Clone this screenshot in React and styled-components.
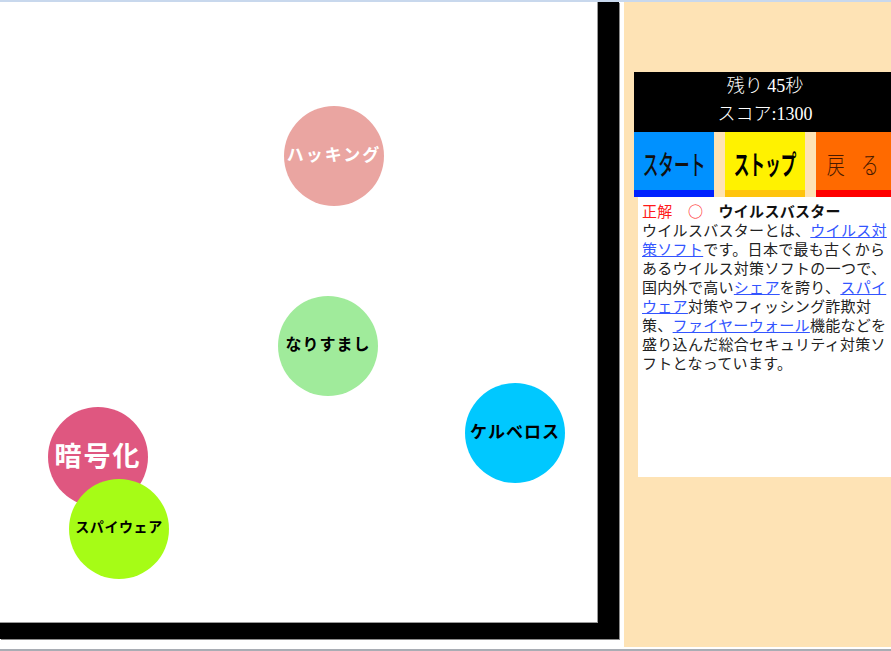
import React from "react";
import styled, { createGlobalStyle } from "styled-components";

const Global = createGlobalStyle`
  html, body { margin: 0; padding: 0; background: #fff; overflow: hidden; }
  body { width: 891px; height: 651px; font-family: "Liberation Serif", "Noto Sans CJK JP", serif; }
`;

const Page = styled.div`
  width: 891px;
  height: 651px;
  display: flex;
  flex-direction: column;
  overflow: hidden;
`;

const TopStrip = styled.div`
  height: 2px;
  background: #c8d8ed;
  flex: none;
`;

const Main = styled.div`
  display: flex;
  align-items: flex-start;
  gap: 5px;
  height: 645px;
  flex: none;
`;

const Bottom = styled.div`
  margin-top: 2px;
  height: 2px;
  background: #a9adb4;
  flex: none;
`;

const Game = styled.div`
  position: relative;
  width: 598px;
  height: 621px;
  background: #fff;
  border-right: 21px solid #000;
  border-bottom: 16px solid #000;
  box-shadow: inset -1px -1px 0 #9a9a9a, 1px 1px 0 #8a8a8a;
  flex: none;
`;

const Ball = styled.div`
  position: absolute;
  width: 100px;
  height: 100px;
  box-sizing: border-box;
  padding-bottom: 6px;
  border-radius: 50%;
  background: ${(p) => p.$bg};
  color: ${(p) => p.$fg};
  display: flex;
  align-items: center;
  justify-content: center;
  white-space: nowrap;
  font-family: "Noto Sans CJK JP", sans-serif;
  font-weight: 700;
  font-size: ${(p) => p.$size}px;
  letter-spacing: ${(p) => p.$ls}px;
`;

const Side = styled.div`
  width: 267px;
  height: 645px;
  background: #fee3b5;
  padding: 70px 0 0 10px;
  box-sizing: border-box;
  overflow: hidden;
  flex: none;
`;

const Score = styled.div`
  width: 262px;
  height: 60px;
  background: #000;
  color: #fff;
  display: flex;
  flex-direction: column;
  align-items: center;
  font-family: "Liberation Serif", "Noto Sans CJK JP", serif;
  font-size: 18px;
  line-height: 30px;
  font-weight: 300;
  box-sizing: border-box;
  padding-bottom: 4px;
  & > div { height: 28px; line-height: 28px; }
`;

const Buttons = styled.div`
  display: flex;
  gap: 11px;
  width: 262px;
`;

const Btn = styled.div`
  width: 80px;
  height: 65px;
  flex: none;
  background: ${(p) => p.$bg};
  border-bottom: 7px solid ${(p) => p.$edge};
  display: flex;
  align-items: center;
  justify-content: center;
  color: ${(p) => p.$fg};
  font-family: "Noto Sans CJK JP", sans-serif;
  font-weight: ${(p) => p.$weight};
  font-size: ${(p) => p.$size}px;
  box-sizing: border-box;
  padding-top: 4px;
  & > span { display: inline-block; transform: scaleX(${(p) => p.$sx}); white-space: nowrap; letter-spacing: ${(p) => p.$ls}px; }
`;

const Info = styled.div`
  margin-left: 4px;
  width: 258px;
  height: 280px;
  background: #fff;
  box-sizing: border-box;
  padding: 4px 4px 0 4px;
  font-family: "Noto Sans CJK JP", sans-serif;
  font-size: 15px;
  letter-spacing: 0.3px;
  line-height: 19px;
  color: #222;
`;

const Red = styled.span`
  color: #ff1a1a;
`;

const Title = styled.b`
  color: #111;
  font-weight: 700;
`;

const Link = styled.a`
  color: #3355ff;
  text-decoration: underline;
`;

const balls = [
  { t: "ハッキング", x: 284, y: 104, bg: "#eaa5a1", fg: "#fff", s: 17, ls: 2 },
  { t: "なりすまし", x: 278, y: 294, bg: "#a0eb9b", fg: "#000", s: 16, ls: 1 },
  { t: "ケルベロス", x: 465, y: 381, bg: "#00c8ff", fg: "#000", s: 17, ls: 1 },
  { t: "暗号化", x: 48, y: 405, bg: "#df5780", fg: "#fff", s: 27, ls: 2 },
  { t: "スパイウェア", x: 69, y: 477, bg: "#a6fc16", fg: "#000", s: 14, ls: 0.6 },
];

export default function App() {
  return (
    <Page>
      <Global />
      <TopStrip />
      <Main>
        <Game>
          {balls.map((b) => (
            <Ball
              key={b.t}
              style={{ left: b.x, top: b.y }}
              $bg={b.bg}
              $fg={b.fg}
              $size={b.s}
              $ls={b.ls}
            >
              {b.t}
            </Ball>
          ))}
        </Game>
        <Side>
          <Score>
            <div>残り 45秒</div>
            <div>スコア:1300</div>
          </Score>
          <Buttons>
            <Btn $bg="#0091ff" $edge="#0022ff" $fg="#111" $weight={500} $size={27} $sx={0.58} $ls={0}>
              <span>スタート</span>
            </Btn>
            <Btn $bg="#fff200" $edge="#ffc40d" $fg="#000" $weight={700} $size={27} $sx={0.58} $ls={0}>
              <span>ストップ</span>
            </Btn>
            <Btn $bg="#ff6a00" $edge="#ff0000" $fg="#4a1a00" $weight={300} $size={24} $sx={0.75} $ls={8}>
              <span>戻 る</span>
            </Btn>
          </Buttons>
          <Info>
            <Red>正解　○　</Red>
            <Title>ウイルスバスター</Title>
            <br />
            ウイルスバスターとは、<Link href="#">ウイルス対策ソフト</Link>です。日本で最も古くからあるウイルス対策ソフトの一つで、国内外で高い<Link href="#">シェア</Link>を誇り、<Link href="#">スパイウェア</Link>対策やフィッシング詐欺対策、<Link href="#">ファイヤーウォール</Link>機能などを盛り込んだ総合セキュリティ対策ソフトとなっています。
          </Info>
        </Side>
      </Main>
      <Bottom />
    </Page>
  );
}
